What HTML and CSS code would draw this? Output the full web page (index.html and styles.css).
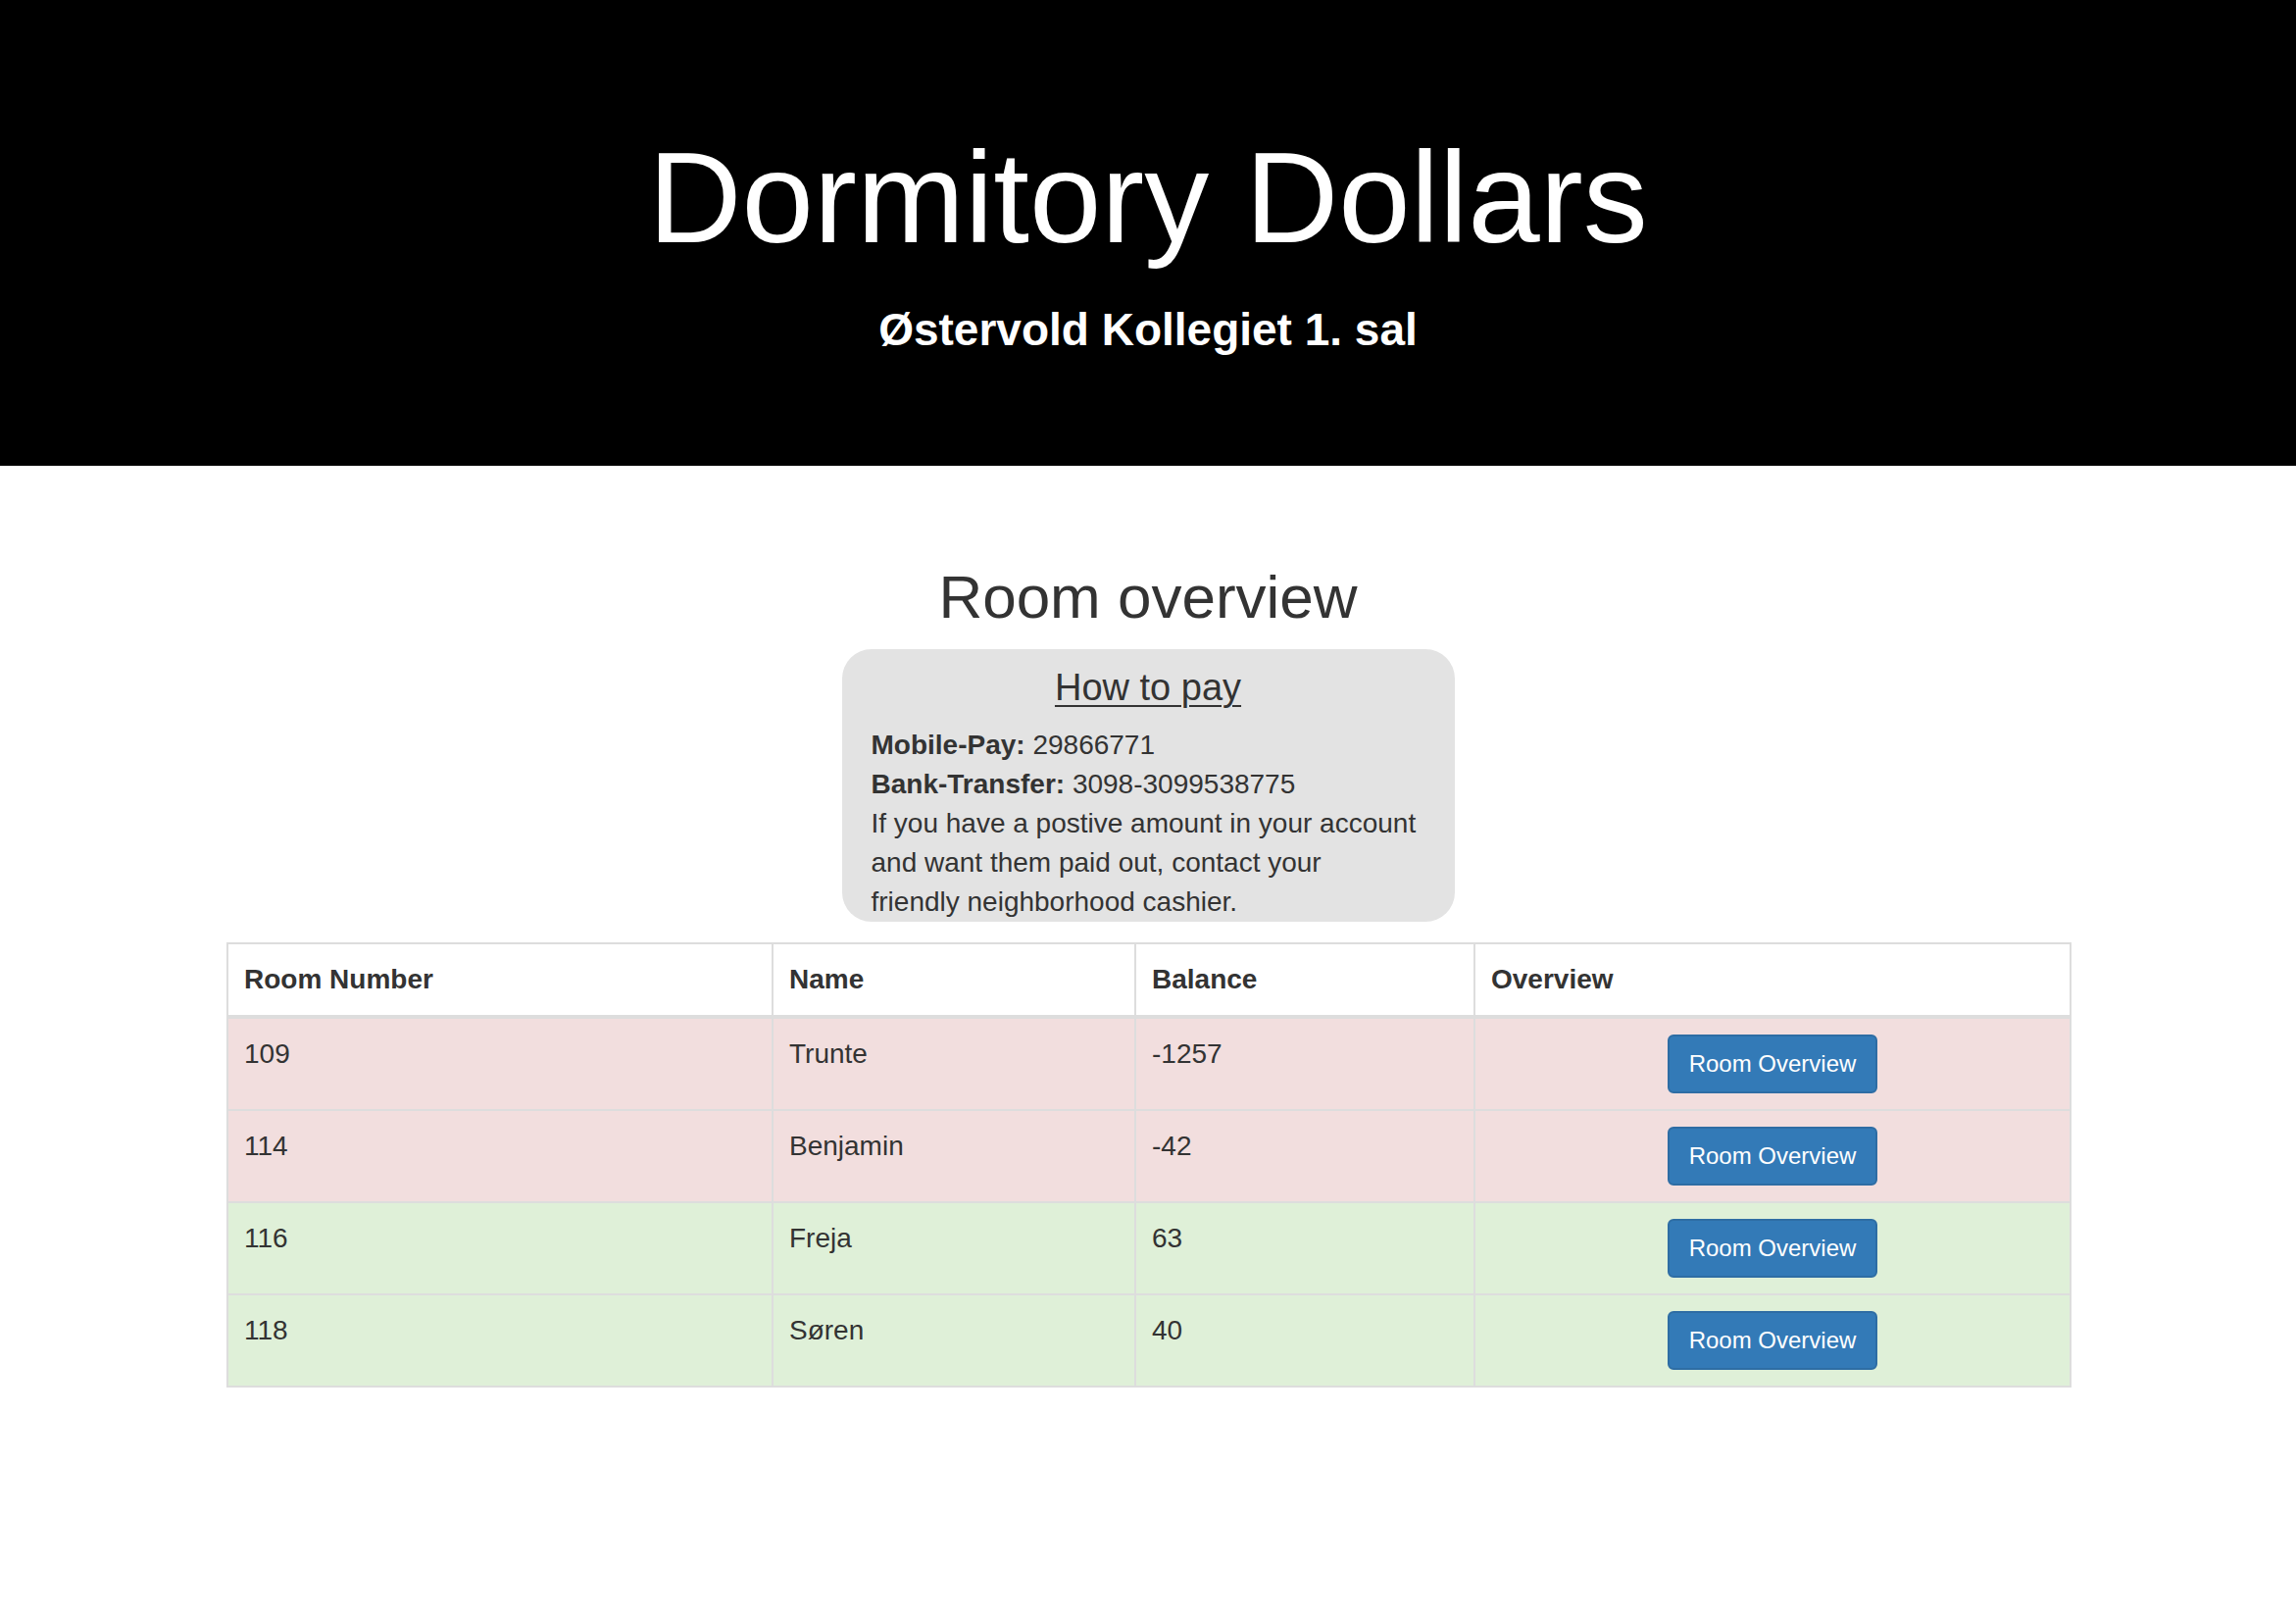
FILE: index.html
```html
<!DOCTYPE html>
<html lang="da">
<head>
<meta charset="utf-8">
<title>Dormitory Dollars</title>
<link rel="stylesheet" href="styles.css">
</head>
<body>
<header class="hero">
  <h1 class="hero-title">Dormitory Dollars</h1>
  <p class="hero-sub">Østervold Kollegiet 1. sal</p>
</header>
<main class="container">
  <h2 class="section-title">Room overview</h2>
  <div class="pay-box">
    <h4 class="pay-title">How to pay</h4>
    <p class="pay-text"><strong>Mobile-Pay:</strong> 29866771<br><strong>Bank-Transfer:</strong> 3098-3099538775<br>If you have a postive amount in your account and want them paid out, contact your<br>friendly neighborhood cashier.</p>
  </div>
  <table class="rooms">
    <colgroup>
      <col class="c-room">
      <col class="c-name">
      <col class="c-bal">
      <col class="c-over">
    </colgroup>
    <thead>
      <tr><th>Room Number</th><th>Name</th><th>Balance</th><th>Overview</th></tr>
    </thead>
    <tbody>
      <tr class="neg"><td>109</td><td>Trunte</td><td>-1257</td><td class="act"><a class="btn" href="#">Room Overview</a></td></tr>
      <tr class="neg"><td>114</td><td>Benjamin</td><td>-42</td><td class="act"><a class="btn" href="#">Room Overview</a></td></tr>
      <tr class="pos"><td>116</td><td>Freja</td><td>63</td><td class="act"><a class="btn" href="#">Room Overview</a></td></tr>
      <tr class="pos"><td>118</td><td>Søren</td><td>40</td><td class="act"><a class="btn" href="#">Room Overview</a></td></tr>
    </tbody>
  </table>
</main>
</body>
</html>
```
FILE: styles.css
```css
* { box-sizing: border-box; }
html, body { margin: 0; padding: 0; }
body {
  font-family: "Liberation Sans", Arial, Helvetica, sans-serif;
  font-size: 28px;
  line-height: 40px;
  color: #333;
  background: #fff;
}
.hero {
  background: #000;
  color: #fff;
  height: 475px;
  padding-top: 129px;
  text-align: center;
}
.hero-title {
  margin: 0;
  font-size: 132px;
  line-height: 1.1;
  font-weight: 400;
}
.hero-sub {
  margin: 37px 0 0;
  font-size: 46px;
  line-height: 1.1;
  font-weight: 700;
}
.container {
  width: 1880px;
  margin: 0 auto;
  padding-top: 60px;
}
.section-title {
  margin: 41px 0 20px;
  font-size: 62px;
  line-height: 66px;
  font-weight: 400;
  text-align: center;
}
.pay-box {
  width: 625px;
  margin: 0 auto 21px;
  padding: 0 30px;
  background: #e3e3e3;
  border-radius: 30px;
}
.pay-title {
  margin: 0;
  padding-top: 19px;
  margin-bottom: 17px;
  font-size: 38px;
  line-height: 41.8px;
  font-weight: 400;
  text-align: center;
  text-decoration: underline;
  text-decoration-thickness: 2px;
  text-underline-offset: 5px;
}
.pay-text { margin: 0; }
.pay-text strong { font-weight: 700; }
.rooms {
  width: 1880px;
  table-layout: fixed;
  border-collapse: collapse;
  border: 2px solid #ddd;
}
.c-room { width: 556px; }
.c-name { width: 370px; }
.c-bal { width: 346px; }
.c-over { width: 608px; }
.rooms th, .rooms td {
  padding: 16px;
  border: 2px solid #ddd;
  text-align: left;
  vertical-align: top;
}
.rooms th {
  font-weight: 700;
  vertical-align: bottom;
  border-bottom: 4px solid #ddd;
  background: #fff;
}
.rooms tr.neg td { background: #f2dede; }
.rooms tr.pos td { background: #dff0d8; }
.rooms td.act { text-align: center; }
.btn {
  display: block;
  width: fit-content;
  margin: 0 auto;
  padding: 10px 20px;
  font-size: 24px;
  line-height: 36px;
  color: #fff;
  text-decoration: none;
  background: #337ab7;
  border: 2px solid #2e6da4;
  border-radius: 6px;
}
```
